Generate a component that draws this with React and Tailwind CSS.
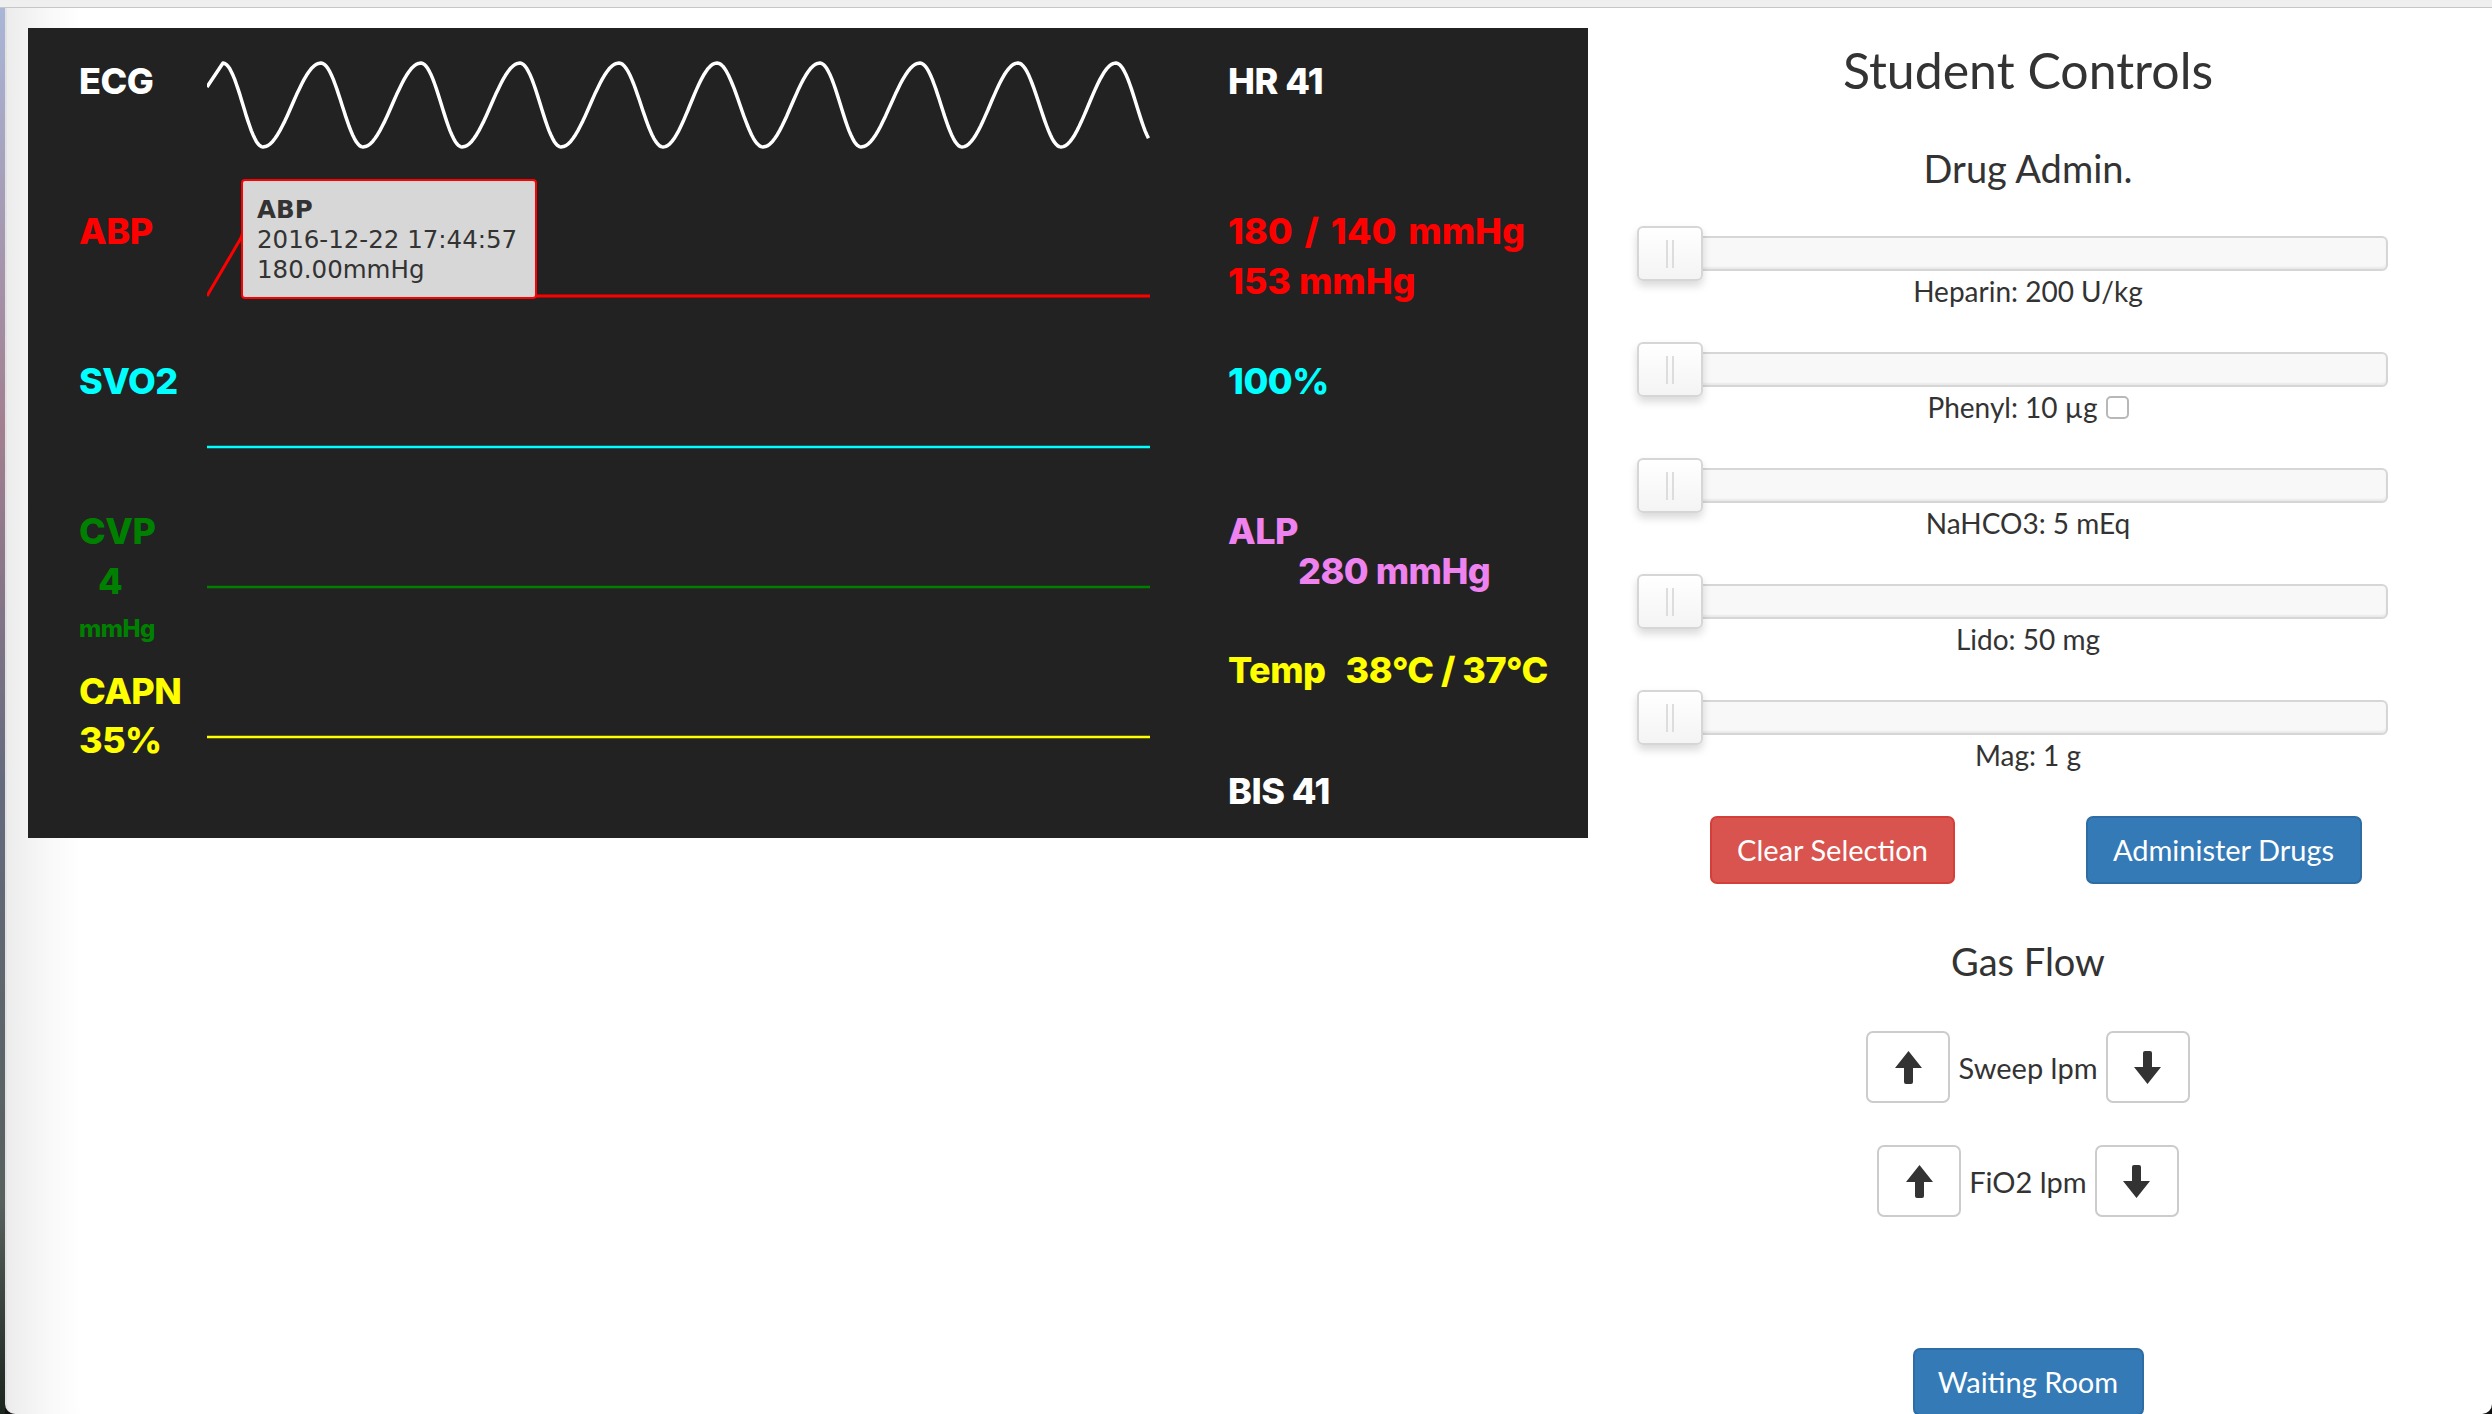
import React from "react";

// monitor waveform helpers (coords are page px, shifted into the svg box)
const OX = 207;
const OY = 28;

const ecgExtremes = [
  [223, 63], [263, 147], [321, 63], [363, 147], [421, 63], [462, 147],
  [520, 63], [561, 147], [619, 63], [663, 147], [717, 63], [763, 147],
  [820, 63], [861, 147], [920, 63], [962, 147], [1018, 63], [1061, 147],
  [1116, 63],
];

const buildEcg = () => {
  const pts = [[207, 87]];
  const seg = (a, b, stopX) => {
    const steps = 24;
    for (let i = 1; i <= steps; i++) {
      const t = i / steps;
      const x = a[0] + (b[0] - a[0]) * t;
      if (stopX && x > stopX) break;
      const y = a[1] + (b[1] - a[1]) * (1 - Math.cos(Math.PI * t)) / 2;
      pts.push([x, y]);
    }
  };
  pts.push(ecgExtremes[0]);
  for (let i = 0; i < ecgExtremes.length - 1; i++) {
    seg(ecgExtremes[i], ecgExtremes[i + 1]);
  }
  seg([1116, 63], [1157, 147], 1150);
  return pts
    .map(([x, y], i) => `${i ? "L" : "M"}${(x - OX).toFixed(1)} ${(y - OY).toFixed(1)}`)
    .join(" ");
};

const ecgPath = buildEcg();

const ArrowUp = () => (
  <svg width="27" height="33" viewBox="0 0 27 33">
    <path
      d="M13.5 0 L27 17 L18 17 L18 31 Q18 33 16 33 L11 33 Q9 33 9 31 L9 17 L0 17 Z"
      fill="#333333"
    />
  </svg>
);

const ArrowDown = () => (
  <svg width="27" height="33" viewBox="0 0 27 33">
    <path
      d="M13.5 33 L27 16 L18 16 L18 2 Q18 0 16 0 L11 0 Q9 0 9 2 L9 16 L0 16 Z"
      fill="#333333"
    />
  </svg>
);

const Slider = ({ children }) => (
  <div className="mb-[41px]">
    <div className="relative w-[751px] h-[35px] rounded-[6px] border-2 border-[#d6d6d6] bg-[#f8f8f8] shadow-[inset_0_-2px_2px_rgba(0,0,0,0.06)]">
      <div className="absolute -left-[2px] -top-[12px] w-[66px] h-[55px] rounded-[6px] border-2 border-[#d6d6d6] bg-gradient-to-b from-white to-[#f4f4f4] shadow-[0_5px_8px_rgba(0,0,0,0.15)] flex items-center justify-center gap-[4px]">
        <span className="w-[2px] h-[28px] bg-[#dddddd]" />
        <span className="w-[2px] h-[28px] bg-[#dddddd]" />
      </div>
    </div>
    <div className="text-center text-[28px] leading-[40px] text-[#333333]">
      {children}
    </div>
  </div>
);

const GasRow = ({ label }) => (
  <div className="flex items-center justify-center gap-[8px]">
    <button className="w-[84px] h-[72px] rounded-[7px] border-2 border-[#cccccc] bg-white flex items-center justify-center">
      <ArrowUp />
    </button>
    <span className="text-[29px] text-[#333333] leading-none">{label}</span>
    <button className="w-[84px] h-[72px] rounded-[7px] border-2 border-[#cccccc] bg-white flex items-center justify-center">
      <ArrowDown />
    </button>
  </div>
);

const Monitor = () => (
  <div className="relative ml-[21px] mt-[20px] w-[1560px] h-[810px] shrink-0 bg-[#222222] flex font-['Inter','Lato',sans-serif] font-extrabold tracking-[-0.5px]">
    <div className="w-[128px] ml-[51px] pt-[1px] flex flex-col text-[36px] leading-none">
      <div className="mt-[34px] text-white">ECG</div>
      <div className="mt-[114px] text-[#ff0000]">ABP</div>
      <div className="mt-[114px] text-[#00ffff]">SVO2</div>
      <div className="mt-[114px] text-[#008000]">CVP</div>
      <div className="mt-[14px] pl-[19px] text-[#008000]">4</div>
      <div className="mt-[18px] text-[24px] text-[#008000]">mmHg</div>
      <div className="mt-[32px] text-[#ffff00]">CAPN</div>
      <div className="mt-[13px] text-[#ffff00]">35%</div>
    </div>

    <svg width="943" height="810" className="shrink-0">
      <path d={ecgPath} fill="none" stroke="#ffffff" strokeWidth="3.5" strokeLinejoin="round" />
      <polyline
        points="0,268 34,210 50,160 72,268 943,268"
        fill="none"
        stroke="#ff0000"
        strokeWidth="3"
      />
      <line x1="0" y1="419" x2="943" y2="419" stroke="#00ffff" strokeWidth="2.5" />
      <line x1="0" y1="559" x2="943" y2="559" stroke="#008000" strokeWidth="2.5" />
      <line x1="0" y1="709" x2="943" y2="709" stroke="#ffff00" strokeWidth="2.5" />
    </svg>

    <div className="ml-[78px] pt-[1px] flex flex-col text-[36px] leading-none whitespace-nowrap">
      <div className="mt-[34px] text-white">HR 41</div>
      <div className="mt-[114px] text-[#ff0000] tracking-normal [word-spacing:4px]">180 / 140 mmHg</div>
      <div className="mt-[14px] text-[#ff0000] tracking-normal">153 mmHg</div>
      <div className="mt-[64px] text-[#00ffff]">100%</div>
      <div className="mt-[114px] text-[#ee82ee]">ALP</div>
      <div className="mt-[4px] pl-[70px] text-[#ee82ee]">280 mmHg</div>
      <div className="mt-[63px] text-[#ffff00]">
        Temp<span className="ml-[20px]">38°C / 37°C</span>
      </div>
      <div className="mt-[85px] text-white">BIS 41</div>
    </div>

    <div className="absolute left-[213px] top-[151px] w-[296px] h-[120px] rounded-[4px] border-2 border-[#ff0000] bg-[#d7d7d7] pt-[14px] pl-[14px] font-['DejaVu_Sans',sans-serif] font-normal tracking-normal text-[24.5px] leading-[30px] text-[#333333] whitespace-nowrap">
      <div className="font-bold">ABP</div>
      <div>2016-12-22 17:44:57</div>
      <div>180.00mmHg</div>
    </div>
  </div>
);

const Controls = () => (
  <div className="ml-[49px] w-[782px] shrink-0 flex flex-col font-['Lato',sans-serif] text-[#333333]">
    <h2 className="mt-[37px] text-center text-[50px] leading-none">Student Controls</h2>
    <h4 className="mt-[54px] text-center text-[38px] leading-none">Drug Admin.</h4>
    <div className="mt-[9px] mx-auto w-[720px] h-[2px] bg-[#eeeeee]" />

    <div className="mt-[40px]">
      <Slider>Heparin: 200 U/kg</Slider>
      <Slider>
        <span className="inline-flex items-center gap-[8px]">
          Phenyl: 10 µg
          <span className="inline-block w-[23px] h-[23px] rounded-[5px] border-2 border-[#b8b8b8] bg-white" />
        </span>
      </Slider>
      <Slider>NaHCO3: 5 mEq</Slider>
      <Slider>Lido: 50 mg</Slider>
      <Slider>Mag: 1 g</Slider>
    </div>

    <div className="grid grid-cols-2">
      <div className="flex justify-center">
        <button className="w-[245px] h-[68px] rounded-[7px] border-2 border-[#d43f3a] bg-[#d9534f] text-white text-[29px]">
          Clear Selection
        </button>
      </div>
      <div className="flex justify-center">
        <button className="w-[276px] h-[68px] rounded-[7px] border-2 border-[#2e6da4] bg-[#337ab7] text-white text-[29px]">
          Administer Drugs
        </button>
      </div>
    </div>

    <h4 className="mt-[58px] text-center text-[38px] leading-none">Gas Flow</h4>
    <div className="mt-[10px] mx-auto w-[720px] h-[2px] bg-[#eeeeee]" />

    <div className="mt-[41px] flex flex-col gap-[42px]">
      <GasRow label="Sweep lpm" />
      <GasRow label="FiO2 lpm" />
    </div>

    <div className="mt-[131px] flex justify-center">
      <button className="w-[231px] h-[68px] rounded-[7px] border-2 border-[#2e6da4] bg-[#337ab7] text-white text-[29px]">
        Waiting Room
      </button>
    </div>
  </div>
);

export default function App() {
  return (
    <div className="w-[2492px] h-[1414px] overflow-hidden bg-[#111111] flex flex-col">
      <div className="h-[8px] shrink-0 bg-[#efefef] border-b border-[#c6c6c6]" />
      <div className="flex flex-1 min-h-0">
        <div className="w-[5px] shrink-0 bg-[linear-gradient(to_bottom,#a9b6d8,#a27f90_30%,#656b7e_55%,#57615d_85%,#1b261f)]" />
        <div className="flex-1 flex rounded-bl-[10px] rounded-br-[10px] overflow-hidden border-l-2 border-[#e2e2e2] bg-[linear-gradient(to_right,#ececec,#f8f8f8_40px,#ffffff_75px)]">
          <Monitor />
          <Controls />
        </div>
      </div>
    </div>
  );
}
